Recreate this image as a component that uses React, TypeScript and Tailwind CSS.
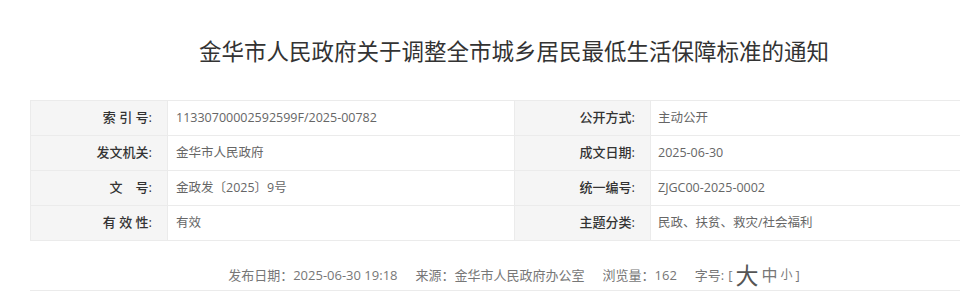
import React from 'react';

const rows = [
  { l1: '索 引 号:', v1: '11330700002592599F/2025-00782', l2: '公开方式:', v2: '主动公开' },
  { l1: '发文机关:', v1: '金华市人民政府', l2: '成文日期:', v2: '2025-06-30' },
  { l1: '文\u3000号:', v1: '金政发〔2025〕9号', l2: '统一编号:', v2: 'ZJGC00-2025-0002' },
  { l1: '有 效 性:', v1: '有效', l2: '主题分类:', v2: '民政、扶贫、救灾/社会福利' },
];

export default function App() {
  return (
    <div
      className="w-[960px] h-[297px] overflow-hidden bg-white"
      style={{ fontFamily: '"Open Sans", "Noto Sans CJK SC", sans-serif' }}
    >
      <div className="ml-[30px] w-[968px]">
        {/* Title */}
        <h1 className="pt-[32px] h-[72px] text-center text-[22.5px] leading-[40px] text-[#333] font-normal">
          金华市人民政府关于调整全市城乡居民最低生活保障标准的通知
        </h1>

        {/* Meta table */}
        <div className="mt-[28px] border-t border-l border-[#ebebeb]">
          {rows.map((r, i) => (
            <div key={i} className="grid grid-cols-[137px_347px_136px_1fr] h-[35px] border-b border-[#ebebeb]">
              <div className="bg-[#f5f5f5] border-r border-[#ebebeb] flex items-center justify-end pr-[15px] text-[13px] font-medium text-[#333]">
                {r.l1}
              </div>
              <div className="border-r border-[#ebebeb] flex items-center pl-[8px] text-[12.5px] text-[#666]">
                {r.v1}
              </div>
              <div className="bg-[#f5f5f5] border-r border-[#ebebeb] flex items-center justify-end pr-[15px] text-[13px] font-medium text-[#333]">
                {r.l2}
              </div>
              <div className="flex items-center pl-[7px] text-[12.5px] text-[#666]">
                {r.v2}
              </div>
            </div>
          ))}
        </div>

        {/* Footer info */}
        <div className="pt-[24px] pb-[5px] border-b border-[#ebebeb] flex justify-center items-center gap-[18px] text-[13px] leading-[20px] text-[#777]">
          <span>发布日期：2025-06-30 19:18</span>
          <span>来源：金华市人民政府办公室</span>
          <span>浏览量：162</span>
          <span className="flex items-center">
            字号:
            <span className="ml-[4px] mr-[3px]">[</span>
            <span className="text-[23px] leading-[20px] text-[#555]">大</span>
            <span className="ml-[3px] text-[16px] leading-[20px]">中</span>
            <span className="ml-[3px] text-[12px] leading-[20px]">小</span>
            <span className="ml-[3px]">]</span>
          </span>
        </div>
      </div>
    </div>
  );
}
